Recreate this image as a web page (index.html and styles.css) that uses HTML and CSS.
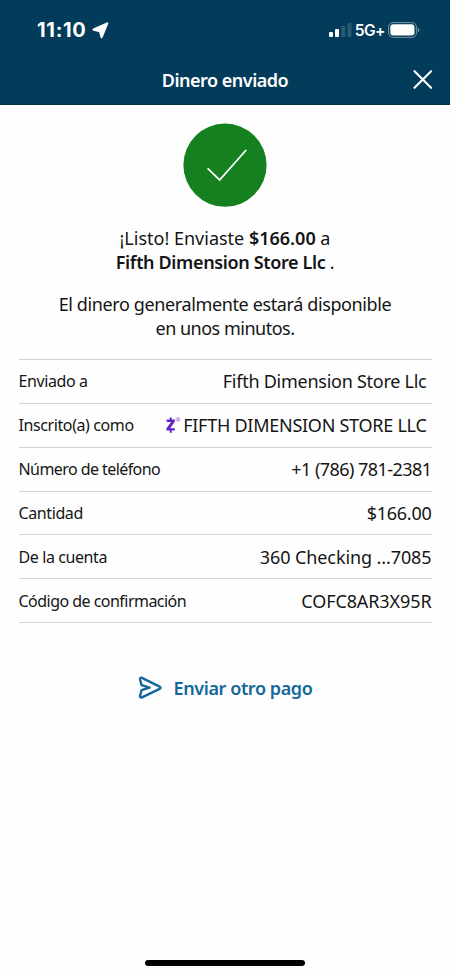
FILE: index.html
```html
<!DOCTYPE html>
<html lang="es">
<head>
    <meta charset="UTF-8">
    <meta name="viewport" content="width=device-width, initial-scale=1.0">
    <title>Dinero enviado</title>
    <link rel="stylesheet" href="styles.css">
</head>
<body>
    <header class="header">
        <div class="status-bar">
            <div class="status-left">
                <span class="time">11:10</span>
                <svg width="17" height="17" viewBox="0 0 17 17">
                    <path d="M15.2 1.4 9.6 15.2 8 9.2 1.6 7.6Z" fill="#fff" stroke="#fff" stroke-width="2.2" stroke-linejoin="round"/>
                </svg>
            </div>
            <div class="status-right">
                <svg class="signal" width="23" height="15" viewBox="0 0 23 15" fill="#fff">
                    <rect x="0" y="9" width="4" height="5" rx="1"/>
                    <rect x="6" y="6" width="4" height="8" rx="1"/>
                    <rect x="12.3" y="3" width="4" height="11" rx="1" opacity=".16"/>
                    <rect x="18.5" y="0" width="4" height="14" rx="1" opacity=".16"/>
                </svg>
                <span class="network">5G+</span>
                <svg width="32" height="16" viewBox="0 0 32 16">
                    <rect x=".6" y=".6" width="27.8" height="14.8" rx="4.4" fill="none" stroke="#7893a6" stroke-width="1"/>
                    <rect x="2.3" y="2.3" width="24.2" height="11.2" rx="3" fill="#fff"/>
                    <path d="M29.8 5.6a2.6 2.6 0 0 1 0 4.8z" fill="#7893a6"/>
                </svg>
            </div>
        </div>
        <div class="title-bar">
            <h1 class="title">Dinero enviado</h1>
            <button class="close" aria-label="Cerrar">
                <svg width="20" height="20" viewBox="0 0 20 20">
                    <path d="M1.5 1.2 18.1 17.8M18.1 1.2 1.5 17.8" stroke="#fff" stroke-width="2.1" stroke-linecap="round"/>
                </svg>
            </button>
        </div>
    </header>

    <main class="content">
        <svg class="check" width="84" height="84" viewBox="0 0 84 84">
            <circle cx="42" cy="42.2" r="41.6" fill="#158020"/>
            <path d="M24.6 45.3 36.6 57 63.2 27" fill="none" stroke="#fff" stroke-width="1.8"/>
        </svg>

        <p class="message">
            <span>¡Listo! Enviaste <b>$166.00</b> a</span><br>
            <span class="line-store"><b>Fifth Dimension Store Llc</b> .</span>
        </p>
        <p class="message note">
            <span>El dinero generalmente estará disponible</span><br>
            <span class="note-end">en unos minutos.</span>
        </p>

        <dl class="details">
            <div class="row">
                <dt>Enviado a</dt>
                <dd class="inset store">Fifth Dimension Store Llc</dd>
            </div>
            <div class="row">
                <dt>Inscrito(a) como</dt>
                <dd class="inset store">
                    <svg class="zelle" width="17" height="18" viewBox="0 0 17 18">
                        <path d="M1.7 3.6H9.8V5.6L5.2 12.2H9.8V14.6H1.4V12.6L6 6H1.7Z" fill="#6522c5"/>
                        <path d="M5.7 1.4V4.4M5.7 13.6V16.8" stroke="#6522c5" stroke-width="2"/>
                        <circle cx="13" cy="3.5" r="2.1" fill="#eadff6" stroke="#c8aee8" stroke-width=".8"/>
                        <path d="M12.4 4.8V2.4h.8a.7.7 0 0 1 0 1.4h-.8M13.1 3.8l.8 1" fill="none" stroke="#a57bd8" stroke-width=".5"/>
                    </svg>
                    <span>FIFTH DIMENSION STORE LLC</span>
                </dd>
            </div>
            <div class="row">
                <dt class="phone-label">Número de teléfono</dt>
                <dd class="phone">+1 (786) 781-2381</dd>
            </div>
            <div class="row">
                <dt>Cantidad</dt>
                <dd class="amount">$166.00</dd>
            </div>
            <div class="row">
                <dt>De la cuenta</dt>
                <dd class="account">360 Checking ...7085</dd>
            </div>
            <div class="row">
                <dt class="code-label">Código de confirmación</dt>
                <dd class="account">COFC8AR3X95R</dd>
            </div>
        </dl>

        <a class="send-again">
            <svg width="24" height="24" viewBox="0 0 24 24">
                <path d="M2 3.2C1.8 2 2.8 1.4 4 1.9L21.6 10.6C22.9 11.2 22.9 12.2 21.6 12.8L4 21.4C2.7 21.9 1.8 21.2 2 20L3.6 14.2 11.6 11.7 3.6 9.2Z" fill="none" stroke="#12699a" stroke-width="2.4" stroke-linejoin="round" stroke-linecap="round"/>
            </svg>
            <span>Enviar otro pago</span>
        </a>
    </main>

    <div class="home-indicator"></div>
</body>
</html>
```

FILE: styles.css
```css
* {
    box-sizing: border-box;
}
body {
    margin: 0;
    height: 975px;
    display: flex;
    flex-direction: column;
    background-color: #fefefe;
    color: #151515;
    font-family: "Noto Sans", "Open Sans", sans-serif;
    overflow: hidden;
}
.header {
    height: 105px;
    background-color: #033b5a;
    border-bottom: 1px solid #022f4a;
    color: #fff;
}
.status-bar {
    display: flex;
    justify-content: space-between;
    align-items: center;
    height: 60px;
    padding: 0 30px 0 37px;
}
.status-left,
.status-right {
    display: flex;
    align-items: center;
}
.status-left {
    gap: 5px;
}
.time {
    font-family: Inter, sans-serif;
    font-size: 20px;
    font-weight: 700;
    letter-spacing: 0.7px;
}
.signal {
    margin-right: 3px;
}
.network {
    margin-right: 3px;
    font-family: Inter, sans-serif;
    font-size: 15.5px;
    font-weight: 600;
    letter-spacing: -0.5px;
}
.title-bar {
    display: grid;
    grid-template-columns: 60px 1fr 60px;
    align-items: center;
    height: 40px;
}
.title {
    grid-column: 2;
    margin: 0;
    text-align: center;
    font-size: 18px;
    font-weight: 600;
    letter-spacing: -0.5px;
    white-space: nowrap;
}
.close {
    display: flex;
    justify-content: center;
    padding: 0 0 0 5px;
    border: 0;
    background: none;
}
.content {
    flex: 1;
    display: flex;
    flex-direction: column;
    align-items: center;
    padding: 18px 18px 0;
}
.message {
    margin: 19px 0 0;
    text-align: center;
    font-size: 18px;
    line-height: 24px;
    white-space: nowrap;
}
.message b {
    font-weight: 600;
}
.line-store {
    letter-spacing: -0.36px;
}
.note {
    margin-top: 18px;
    letter-spacing: -0.38px;
}
.note-end {
    letter-spacing: -0.5px;
}
.details {
    width: 413px;
    margin: 19px 0 0;
    border-top: 1px solid #d3d3d3;
}
.row {
    display: flex;
    justify-content: space-between;
    align-items: center;
    height: 43.85px;
    border-bottom: 1px solid #d3d3d3;
    white-space: nowrap;
}
.row dt {
    font-size: 16px;
    letter-spacing: -0.4px;
}
.row .phone-label {
    letter-spacing: -0.57px;
}
.row .code-label {
    letter-spacing: -0.53px;
}
.row dd {
    display: flex;
    align-items: center;
    margin: 0;
    font-size: 18px;
}
.row .inset {
    padding-right: 5px;
}
.store {
    letter-spacing: -0.26px;
}
.zelle {
    margin-right: 1px;
}
.phone {
    letter-spacing: -0.55px;
}
.amount {
    letter-spacing: -0.25px;
}
.account {
    letter-spacing: -0.1px;
}
.send-again {
    display: flex;
    align-items: center;
    gap: 12px;
    margin-top: 53px;
    color: #12699a;
    font-size: 18px;
    font-weight: 600;
    letter-spacing: -0.4px;
}
.home-indicator {
    align-self: center;
    width: 160px;
    height: 6px;
    margin-bottom: 9px;
    border-radius: 3px;
    background-color: #000;
}
```
